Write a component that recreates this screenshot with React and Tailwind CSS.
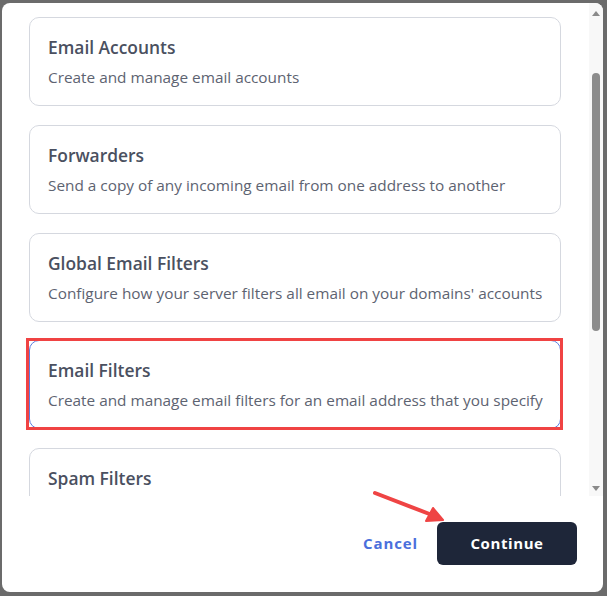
import React from "react";

const items = [
  { title: "Email Accounts", desc: "Create and manage email accounts" },
  { title: "Forwarders", desc: "Send a copy of any incoming email from one address to another" },
  { title: "Global Email Filters", desc: "Configure how your server filters all email on your domains' accounts" },
  { title: "Email Filters", desc: "Create and manage email filters for an email address that you specify", selected: true },
  { title: "Spam Filters", desc: "Control how spam is handled for your email accounts" },
];

export default function App() {
  return (
    <div
      className="w-[607px] h-[596px] bg-[#6b6b6b] overflow-hidden pt-[3px] pl-[2px]"
      style={{ fontFamily: '"Open Sans", "Noto Sans", sans-serif' }}
    >
      <div className="relative w-[601px] h-[589px] bg-white rounded-[8px] overflow-hidden flex flex-col">
        <div className="flex h-[493px]">
          <div className="flex-1 overflow-hidden pt-[14px] pl-[27px]">
            <div className="flex flex-col gap-[18.75px] w-[532px]">
              {items.map((it) => (
                <div
                  key={it.title}
                  className={
                    "relative rounded-[10px] border bg-white px-[18px] pt-[17px] pb-[17px] " +
                    (it.selected ? "border-[#5b7de0]" : "border-[#d5d8df]")
                  }
                >
                  <div className="text-[17.4px] leading-[24px] font-semibold text-[#4a5060]">{it.title}</div>
                  <div className="mt-[7px] text-[15.35px] leading-[22px] text-[#5d6371] whitespace-nowrap">{it.desc}</div>
                  {it.selected && (
                    <div className="absolute -top-[3px] -left-[4px] -right-[3px] -bottom-[2px] border-[3px] border-[#f04343]" />
                  )}
                </div>
              ))}
            </div>
          </div>
          <div className="relative w-[14px] bg-[#f8f8f8] flex flex-col items-center">
            <svg width="10" height="8" viewBox="0 0 10 8" className="mt-[6px]">
              <path d="M1 7 L5 2 L9 7 Z" fill="#8a8a8a" />
            </svg>
            <div className="mt-[56px] w-[8px] h-[258px] rounded-full bg-[#8c8c8c]" />
            <div className="flex-1" />
            <svg width="10" height="8" viewBox="0 0 10 8" className="mb-[3px]">
              <path d="M1 1 L9 1 L5 6 Z" fill="#8a8a8a" />
            </svg>
          </div>
        </div>
        <div className="flex-1 flex items-center justify-end pr-[26px] pb-[2px] gap-[19px]">
          <button className="text-[15px] font-bold tracking-[0.06em] text-[#4a6fdc]">Cancel</button>
          <button className="w-[140px] h-[43px] rounded-[6px] bg-[#1e2639] text-white text-[15px] font-bold tracking-[0.04em]">
            Continue
          </button>
        </div>
        <svg className="absolute left-0 top-0 pointer-events-none" width="601" height="589">
          <line x1="373" y1="490" x2="430" y2="512" stroke="#ef4444" strokeWidth="4" strokeLinecap="round" />
          <path d="M441 517 L424 518 L431 505 Z" fill="#ef4444" stroke="#ef4444" strokeWidth="2" strokeLinejoin="round" />
        </svg>
      </div>
    </div>
  );
}
